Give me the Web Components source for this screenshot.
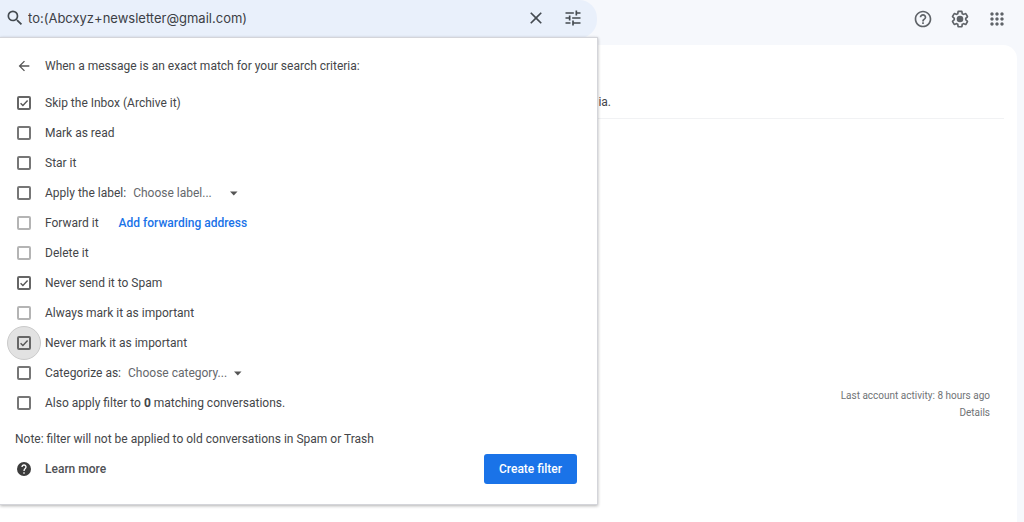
<!DOCTYPE html>
<html lang="en">
<head>
<meta charset="utf-8">
<title>Create filter</title>
<style>
html { height: 100%; }
body { margin: 0; min-height: 100%; display: flex; background: #f6f8fc; font: 12px/18px Roboto, "Liberation Sans", sans-serif; color: #444649; }
mail-app { flex: 1; }
</style>
</head>
<body>
<mail-app></mail-app>

<script>
const ICONS = {
  search: '<path d="M15.5 14h-.79l-.28-.27A6.47 6.47 0 0 0 16 9.5 6.5 6.5 0 1 0 9.5 16c1.61 0 3.09-.59 4.23-1.57l.27.28v.79l5 4.99L20.49 19l-4.99-5zm-6 0C7.01 14 5 11.99 5 9.5S7.01 5 9.5 5 14 7.01 14 9.5 11.99 14 9.5 14z"/>',
  close: '<path d="M19 6.41L17.59 5 12 10.59 6.41 5 5 6.41 10.59 12 5 17.59 6.41 19 12 13.41 17.59 19 19 17.59 13.41 12z"/>',
  tune: '<path d="M3 17v2h6v-2H3zM3 5v2h10V5H3zm10 16v-2h8v-2h-8v-2h-2v6h2zM7 9v2H3v2h4v2h2V9H7zm14 4v-2H11v2h10zm-6-4h2V7h4V5h-4V3h-2v6z"/>',
  back: '<path d="M20 11H7.83l5.59-5.59L12 4l-8 8 8 8 1.41-1.41L7.83 13H20v-2z"/>',
  help: '<path d="M11 18h2v-2h-2v2zm1-16C6.48 2 2 6.48 2 12s4.48 10 10 10 10-4.48 10-10S17.52 2 12 2zm0 18c-4.41 0-8-3.59-8-8s3.59-8 8-8 8 3.59 8 8-3.59 8-8 8zm0-14c-2.21 0-4 1.79-4 4h2c0-1.1.9-2 2-2s2 .9 2 2c0 2-3 1.75-3 5h2c0-2.25 3-2.5 3-5 0-2.21-1.79-4-4-4z"/>',
  helpFilled: '<circle cx="12" cy="12" r="10.5"/><path fill="#fff" d="M11 17h2v2h-2zM12 5c-2.21 0-4 1.79-4 4h2c0-1.1.9-2 2-2s2 .9 2 2c0 2-3 2.25-3 6h2c0-2.7 3-3.5 3-6 0-2.21-1.79-4-4-4z"/>',
  settings: '<path d="M13.85 22.25h-3.7c-.74 0-1.36-.54-1.45-1.27l-.27-1.89c-.27-.14-.53-.29-.79-.46l-1.8.72c-.7.26-1.47-.03-1.81-.65L2.2 15.53c-.35-.66-.2-1.44.36-1.88l1.53-1.19c-.01-.15-.02-.3-.02-.46 0-.15.01-.31.02-.46l-1.52-1.19c-.59-.45-.74-1.26-.37-1.88l1.85-3.19c.34-.62 1.11-.9 1.79-.63l1.81.73c.26-.17.52-.32.78-.46l.27-1.91c.09-.7.71-1.25 1.44-1.25h3.7c.74 0 1.36.54 1.45 1.27l.27 1.89c.27.14.53.29.79.46l1.8-.72c.71-.26 1.48.03 1.82.65l1.84 3.18c.36.66.2 1.44-.36 1.88l-1.52 1.19c.01.15.02.3.02.46s-.01.31-.02.46l1.52 1.19c.56.45.72 1.23.37 1.86l-1.86 3.22c-.34.62-1.11.9-1.8.63l-1.8-.72c-.26.17-.52.32-.78.46l-.27 1.91c-.1.68-.72 1.22-1.46 1.22zm-3.23-2h2.76l.37-2.55.53-.22c.44-.18.88-.44 1.34-.78l.45-.34 2.38.96 1.38-2.4-2.03-1.58.07-.56c.03-.26.06-.51.06-.78s-.03-.53-.06-.78l-.07-.56 2.03-1.58-1.39-2.4-2.39.96-.45-.35c-.42-.32-.87-.58-1.33-.77l-.52-.22-.37-2.55h-2.76l-.37 2.55-.53.21c-.44.19-.88.44-1.34.79l-.45.33-2.38-.95-1.39 2.39 2.03 1.58-.07.56a7 7 0 0 0-.06.79c0 .26.02.53.06.78l.07.56-2.03 1.58 1.38 2.4 2.39-.96.45.35c.43.33.86.58 1.33.77l.53.22.38 2.55z"/><circle cx="12" cy="12" r="4"/>',
  apps: '<path d="M6 8c1.1 0 2-.9 2-2s-.9-2-2-2-2 .9-2 2 .9 2 2 2zm6 12c1.1 0 2-.9 2-2s-.9-2-2-2-2 .9-2 2 .9 2 2 2zm-6 0c1.1 0 2-.9 2-2s-.9-2-2-2-2 .9-2 2 .9 2 2 2zm0-6c1.1 0 2-.9 2-2s-.9-2-2-2-2 .9-2 2 .9 2 2 2zm6 0c1.1 0 2-.9 2-2s-.9-2-2-2-2 .9-2 2 .9 2 2 2zm4-8c0 1.1.9 2 2 2s2-.9 2-2-.9-2-2-2-2 .9-2 2zm-4 2c1.1 0 2-.9 2-2s-.9-2-2-2-2 .9-2 2 .9 2 2 2zm6 6c1.1 0 2-.9 2-2s-.9-2-2-2-2 .9-2 2 .9 2 2 2zm0 6c1.1 0 2-.9 2-2s-.9-2-2-2-2 .9-2 2 .9 2 2 2z"/>',
  arrow: '<path d="M4 9h15l-7.5 8z"/>'
};

function define(name, html) {
  customElements.define(name, class extends HTMLElement {
    constructor() {
      super();
      this.attachShadow({ mode: 'open' }).innerHTML = html;
    }
  });
}

const RESET = 'button { border: 0; padding: 0; background: none; color: inherit; font: inherit; cursor: pointer; display: grid; place-items: center; }';

class MailIcon extends HTMLElement {
  connectedCallback() {
    if (this.shadowRoot) return;
    this.attachShadow({ mode: 'open' }).innerHTML = `
      <style>
        :host { display: block; width: var(--icon-size, 20px); height: var(--icon-size, 20px); }
        svg { display: block; width: 100%; height: 100%; fill: currentColor; }
      </style>
      <svg viewBox="0 0 24 24" aria-hidden="true">${ICONS[this.getAttribute('name')]}</svg>`;
  }
}
customElements.define('mail-icon', MailIcon);

define('search-bar', `
  <style>
    :host { display: flex; align-items: center; box-sizing: border-box; height: 38px; padding: 0 14px 2px 5px; background: #e9f0fb; border-radius: 0 18px 18px 0; color: #444a50; }
    ${RESET}
    button { width: 20px; height: 36px; }
    input { flex: 1; min-width: 0; border: 0; padding: 0 0 0 3px; background: none; outline: 0; font: 13px/20px Inter, Roboto, sans-serif; color: #3c4045; }
    .close { margin-right: 17px; }
  </style>
  <button aria-label="Search"><mail-icon name="search"></mail-icon></button>
  <input aria-label="Search mail" value="to:(Abcxyz+newsletter@gmail.com)">
  <button class="close" aria-label="Clear search"><mail-icon name="close"></mail-icon></button>
  <button aria-label="Show search options"><mail-icon name="tune"></mail-icon></button>`);

define('top-actions', `
  <style>
    :host { display: flex; gap: 17px; height: 38px; align-items: center; color: #5f6368; }
    ${RESET}
    button { width: 20px; height: 36px; }
  </style>
  <button aria-label="Support"><mail-icon name="help"></mail-icon></button>
  <button aria-label="Settings"><mail-icon name="settings"></mail-icon></button>
  <button aria-label="Google apps"><mail-icon name="apps"></mail-icon></button>`);

class FilterOption extends HTMLElement {
  connectedCallback() {
    if (this.shadowRoot) return;
    const on = this.hasAttribute('checked') ? 'checked' : '';
    const off = this.hasAttribute('disabled') ? 'disabled' : '';
    this.attachShadow({ mode: 'open' }).innerHTML = `
      <style>
        :host { display: flex; align-items: center; height: 30px; padding-left: 7px; }
        .halo { width: 34px; height: 34px; box-sizing: border-box; display: grid; place-items: center; margin-right: 4px; border-radius: 50%; }
        :host([active]) .halo { background: #e2e2e2; border: 1px solid #cbcbcb; }
        input { appearance: none; grid-area: 1 / 1; width: 14px; height: 14px; box-sizing: border-box; margin: 0; border: 2px solid #767676; border-radius: 2px; }
        input:disabled { border-color: #b4b4b4; }
        svg { grid-area: 1 / 1; width: 14px; height: 14px; fill: none; stroke: #555; stroke-width: 1.4; pointer-events: none; visibility: hidden; }
        input:checked { border-color: #666; }
        input:checked + svg { visibility: visible; }
      </style>
      <span class="halo">
        <input type="checkbox" id="box" ${on} ${off}>
        <svg viewBox="0 0 14 14" aria-hidden="true"><path d="M3.6 7.2l2.3 2.2 4.7-4.9"/></svg>
      </span>
      <label for="box"><slot></slot></label>
      <slot name="extra"></slot>`;
  }
}
customElements.define('filter-option', FilterOption);

class ChoiceMenu extends HTMLElement {
  connectedCallback() {
    if (this.shadowRoot) return;
    const text = this.getAttribute('text');
    this.attachShadow({ mode: 'open' }).innerHTML = `
      <style>
        :host { display: flex; align-items: center; margin-left: 7px; --icon-size: 12px; color: #65686c; }
        select { appearance: none; border: 0; margin: 0; padding: 0; background: none; font: inherit; color: inherit; }
        mail-icon { margin-left: var(--arrow-gap, 4px); color: #555; }
      </style>
      <select aria-label="${text}"><option>${text}</option></select>
      <mail-icon name="arrow"></mail-icon>`;
  }
}
customElements.define('choice-menu', ChoiceMenu);

define('filter-panel', `
  <style>
    :host { display: block; box-sizing: border-box; padding: 13px 0 20px; background: #fff; border: 1px solid #d4d5da; border-left: 0; box-shadow: 0 1px 3px rgba(0,0,0,.3); }
    ${RESET}
    header { display: flex; align-items: center; height: 30px; padding-left: 7px; margin-bottom: 7px; --icon-size: 16px; }
    header button { width: 34px; height: 30px; margin-right: 4px; color: #555; }
    h1 { margin: 0; font: inherit; }
    a { color: #1a73e8; text-decoration: none; font-weight: 500; }
    .forward { margin-left: 20px; }
    .wide { --arrow-gap: 16px; }
    p { margin: 6px 0 0; padding-left: 15px; line-height: 30px; }
    footer { display: flex; align-items: center; justify-content: space-between; height: 30px; padding: 0 20px 0 7px; --icon-size: 16px; }
    footer a { display: flex; align-items: center; gap: 4px; color: #505255; }
    footer span { width: 34px; display: grid; place-items: center; color: #3c3c3c; }
    footer button { width: 93px; height: 30px; border-radius: 3px; background: #1a73e8; color: #fff; font-weight: 500; }
  </style>
  <header>
    <button aria-label="Back"><mail-icon name="back"></mail-icon></button>
    <h1>When a message is an exact match for your search criteria:</h1>
  </header>
  <filter-option checked>Skip the Inbox (Archive it)</filter-option>
  <filter-option>Mark as read</filter-option>
  <filter-option>Star it</filter-option>
  <filter-option>Apply the label:<choice-menu class="wide" slot="extra" text="Choose label..."></choice-menu></filter-option>
  <filter-option disabled>Forward it<a class="forward" slot="extra" href="#forwarding">Add forwarding address</a></filter-option>
  <filter-option disabled>Delete it</filter-option>
  <filter-option checked>Never send it to Spam</filter-option>
  <filter-option disabled>Always mark it as important</filter-option>
  <filter-option checked active>Never mark it as important</filter-option>
  <filter-option>Categorize as:<choice-menu slot="extra" text="Choose category..."></choice-menu></filter-option>
  <filter-option>Also apply filter to <b>0</b> matching conversations.</filter-option>
  <p>Note: filter will not be applied to old conversations in Spam or Trash</p>
  <footer>
    <a href="#help"><span><mail-icon name="helpFilled"></mail-icon></span>Learn more</a>
    <button>Create filter</button>
  </footer>`);

define('mail-content', `
  <style>
    :host { display: flex; flex-direction: column; box-sizing: border-box; margin-right: 7px; padding: 47px 13px 0 0; background: #fff; border-radius: 0 14px 0 0; }
    p { margin: 0; padding: 0 0 6px 59.6%; border-bottom: 1px solid #f1f2f4; line-height: 20px; }
    footer { margin: 268px 14px 0 0; text-align: right; font-size: 10px; line-height: 17px; color: #707376; }
    a { color: inherit; text-decoration: none; }
  </style>
  <p>ia.</p>
  <footer>Last account activity: 8 hours ago<br><a href="#details">Details</a></footer>`);

define('mail-app', `
  <style>
    :host { display: flex; flex-direction: column; position: relative; }
    .bar { display: flex; justify-content: space-between; height: 45px; padding-right: 17px; }
    search-bar { width: 59.3%; }
    mail-content { flex: 1; }
    filter-panel { position: absolute; top: 37px; left: 0; width: 58.4%; }
  </style>
  <div class="bar"><search-bar></search-bar><top-actions></top-actions></div>
  <mail-content></mail-content>
  <filter-panel></filter-panel>`);
</script>
</body>
</html>
